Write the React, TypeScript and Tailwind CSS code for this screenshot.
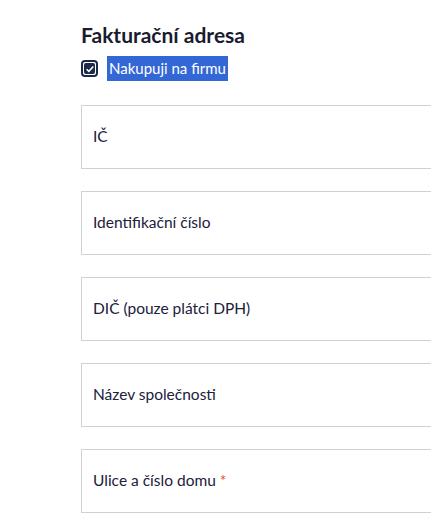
import { useState } from "react";

const fields = [
  { label: "IČ" },
  { label: "Identifikační číslo" },
  { label: "DIČ (pouze plátci DPH)" },
  { label: "Název společnosti" },
  { label: "Ulice a číslo domu", required: true },
];

function Field({ label, required }: { label: string; required?: boolean }) {
  return (
    <div className="flex h-[64px] w-[400px] shrink-0 items-center border border-[#d1d1d1] bg-white px-[11px]">
      <span className="text-[15.5px] text-[#20203a]">
        {label}
        {required && <span className="ml-[4px] text-[#e0541c]">*</span>}
      </span>
    </div>
  );
}

export default function App() {
  const [checked, setChecked] = useState(true);

  return (
    <div
      className="min-h-[522px] w-[431px] overflow-hidden bg-white pl-[81px] pt-[22px]"
      style={{ fontFamily: "Lato, 'Open Sans', sans-serif" }}
    >
      <h2 className="text-[21px] font-bold leading-[26px] text-[#1b1b2f]">Fakturační adresa</h2>

      <label className="mt-[8px] flex h-[25px] items-center" onClick={() => setChecked(!checked)}>
        <span className="flex h-[17px] w-[17px] items-center justify-center rounded-[4px] border-2 border-[#1c2a48] bg-white">
          {checked && (
            <span className="flex h-[11px] w-[11px] items-center justify-center rounded-[2px] bg-[#1c2a48]">
              <svg viewBox="0 0 12 12" className="h-[10px] w-[10px]">
                <path d="M2 6.2l2.6 2.6L10 3" fill="none" stroke="white" strokeWidth="1.8" />
              </svg>
            </span>
          )}
        </span>
        <span className="ml-[9px] bg-[#3367d6] px-[2px] text-[15px] leading-[25px] text-white">
          Nakupuji na firmu
        </span>
      </label>

      <div className="mt-[24px] flex flex-col gap-[22px]">
        {fields.map((f) => (
          <Field key={f.label} label={f.label} required={f.required} />
        ))}
      </div>
    </div>
  );
}
